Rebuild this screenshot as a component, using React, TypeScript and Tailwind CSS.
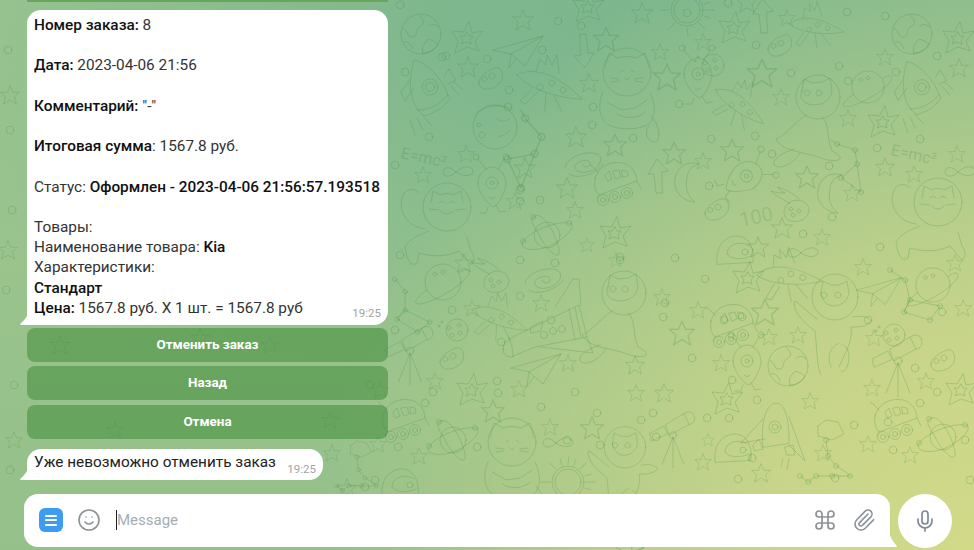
import { Command, Mic, Paperclip, Smile } from 'lucide-react';
import type { ReactNode } from 'react';

type Doodle = [string, number, number, number?, number?];

// wallpaper items: symbol, x, y, scale, rotation
const doodles: Doodle[] = [
  ['star', 523, 20], ['star', 642, 13], ['star', 468, 67], ['star', 589, 83, 0.9], ['star', 606, 39, 1.2], ['star', 660, 52, 0.8],
  ['star', 667, 77, 1.3], ['star', 576, 137], ['star', 615, 145, 1.1], ['star', 674, 153, 1.1], ['star', 525, 168], ['star', 466, 154, 0.8],
  ['star', 423, 175, 0.8], ['star', 567, 188], ['star', 747, 2], ['star', 703, 42, 0.8], ['star', 787, 18, 0.8], ['star', 762, 73, 1.4],
  ['star', 781, 97, 0.8], ['star', 848, 118, 0.8], ['star', 732, 150, 1.1], ['star', 703, 161, 0.8], ['star', 807, 177, 1.1], ['star', 852, 193, 0.8],
  ['star', 885, 167, 0.9], ['star', 914, 174, 0.8], ['star', 885, 57, 0.8], ['star', 959, 68, 0.9], ['star', 957, 154, 0.8], ['star', 782, 228, 1],
  ['star', 822, 237, 0.8], ['star', 758, 247, 1], ['star', 464, 263, 0.9], ['star', 515, 201, 0.8], ['star', 575, 210, 0.8], ['star', 587, 245, 0.7],
  ['star', 616, 260, 0.7], ['star', 472, 308, 0.8], ['star', 541, 303, 0.8], ['star', 662, 297, 0.8], ['star', 682, 333, 1.2], ['star', 568, 363, 0.8],
  ['star', 635, 365, 0.9], ['star', 863, 267, 0.8], ['star', 955, 263, 0.8], ['star', 765, 312, 1.3], ['star', 698, 310, 0.8], ['star', 769, 337, 0.8],
  ['star', 798, 335, 0.8], ['star', 874, 338, 0.8], ['star', 963, 308, 0.8], ['star', 721, 363, 0.8], ['star', 872, 388, 0.8], ['star', 926, 381, 0.8],
  ['star', 810, 401, 0.8], ['star', 868, 444, 0.8], ['star', 823, 453, 0.8], ['star', 910, 455, 0.8], ['star', 708, 440, 0.6], ['star', 703, 462, 0.8],
  ['star', 761, 473, 0.9], ['star', 435, 381, 0.8], ['star', 519, 389, 0.8], ['star', 550, 427, 0.8], ['star', 592, 428, 1.1], ['star', 636, 393, 0.8],
  ['star', 664, 393, 0.9], ['star', 419, 456, 0.8], ['star', 378, 444, 0.8], ['star', 332, 453, 0.8], ['star', 347, 488, 0.9], ['star', 380, 390, 0.8],
  ['star', 493, 411, 1.1], ['star', 60, 345, 0.9], ['star', 200, 338, 0.9], ['star', 270, 345, 0.8], ['star', 115, 430, 0.8], ['star', 330, 420, 0.8],
  ['star', 10, 95, 0.9], ['star', 8, 250, 0.9], ['star', 14, 440, 0.8],
  ['dstar', 733, 28], ['dstar', 957, 38], ['dstar', 882, 122], ['dstar', 466, 38], ['dstar', 587, 7], ['dstar', 614, 233], ['dstar', 747, 278],
  ['dstar', 726, 399], ['dstar', 960, 390], ['dstar', 471, 390],
  ['earth', 421, 34], ['earth', 912, 34], ['earth', 788, 366], ['earth', 630, 530, 1.1],
  ['rocket', 430, 90], ['rocket', 922, 90, 0.95],
  ['catA', 627, 84], ['catB', 814, 109], ['catC', 938, 212], ['catC', 447, 217], ['catB', 620, 305], ['catD', 835, 309], ['catA', 512, 454], ['catD', 625, 458, 0.9],
  ['ufo', 550, 87], ['ufo', 817, 28, 0.8, -12], ['ufo', 740, 107, 0.85, 15], ['ufo', 500, 320, 0.85], ['ufo', 790, 278, 0.95, -15],
  ['ring', 868, 87, 0.9], ['ring', 443, 282], ['ring', 933, 285, 0.95],
  ['tri', 855, 160], ['tri', 535, 148, 1.3, 30], ['box', 910, 300], ['box', 405, 310, 0.9, 15], ['chain', 830, 450], ['chain', 360, 465, 0.8],
  ['rover', 617, 183], ['rover', 733, 325], ['rover', 897, 420], ['rover', 405, 420],
  ['scope', 898, 363], ['scope', 410, 353, 0.95], ['scope', 673, 437, 0.9],
  ['atom', 547, 235], ['atom', 943, 437], ['atom', 453, 440],
  ['sun', 687, 10], ['sun', 568, 482],
  ['meteor', 797, 207], ['meteor', 497, 278],
  ['spiral', 583, 162], ['spiral', 543, 278],
  ['shuttle', 553, 323], ['capeRocket', 775, 425],
  ['alien', 698, 78], ['alien', 492, 187], ['alien', 747, 365], ['alien', 743, 178, 1, 60],
  ['plane', 517, 52], ['plane', 878, 292, 0.9], ['plane', 535, 370],
  ['arrow', 582, 50], ['arrow', 765, 17, 1, 180], ['arrow', 660, 177, 1, 180],
  ['moon', 830, 193], ['moon', 687, 182],
  ['face', 495, 127],
  ['bact', 491, 78], ['bact', 780, 45], ['bact', 717, 209], ['bact', 452, 358], ['bact', 943, 360],
  ['inf', 460, 172], ['inf', 962, 172], ['inf', 805, 253], ['inf', 560, 443],
  ['ball', 713, 65], ['ball', 894, 335], ['ball', 457, 330],
  ['helm', 735, 252], ['helm', 400, 485], ['helm', 733, 450],
];

const dots: [number, number][] = [
  [558, 21], [581, 26], [687, 13], [542, 50], [446, 56], [487, 59], [442, 57], [509, 90], [508, 107], [679, 104], [593, 107], [592, 125], [429, 137], [633, 138],
  [405, 72], [728, 3], [847, 12], [885, 16], [756, 45], [791, 73], [839, 66], [848, 81], [896, 72], [937, 56], [711, 139], [755, 136], [772, 154], [829, 166],
  [877, 148], [920, 139], [709, 186], [832, 217], [803, 234], [540, 200], [520, 201], [520, 190], [620, 257], [620, 260], [555, 263], [520, 260],
  [520, 296], [452, 310], [501, 342], [551, 320], [663, 317], [665, 303], [675, 258], [705, 279], [724, 320], [742, 317], [692, 358], [732, 380], [757, 400], [707, 418],
  [729, 418], [752, 458], [738, 479], [880, 247], [868, 320], [942, 312], [915, 368], [937, 392], [920, 403], [854, 425], [888, 422], [893, 450], [835, 478], [433, 392],
  [425, 403], [497, 381], [498, 393], [575, 392], [541, 407], [597, 413], [567, 440], [653, 413], [641, 420], [656, 437], [600, 445], [398, 447], [477, 447], [365, 487],
  [370, 385], [8, 50], [10, 130], [12, 210], [6, 290], [14, 385], [10, 470], [400, 5], [395, 165], [400, 255], [395, 330], [965, 440], [970, 480], [375, 480],
];

function Bold({ children }: { children: ReactNode }) {
  return <span className="font-medium text-[#111]">{children}</span>;
}

function Wallpaper() {
  return (
    <svg className="absolute inset-0" width={974} height={550} viewBox="0 0 974 550" fill="none" stroke="#3f8a45" strokeOpacity={0.25} strokeWidth={1} strokeLinejoin="round" strokeLinecap="round">
      <defs>
        <path id="star" d="M0-10 3-3 10.500-3 5 2 7 10 0 5.500-7 10-5 2-10.500-3-3-3Z" />
        <g id="dstar">
          <path d="M3-16 6-5 17-7 9 3 13 13 1 9-11 15-8 3-14-7-3-6Z" />
          <path d="M1-6 3-2 7-2 4 2 5 6 0 4-5 6-3 2-6-2-2-2Z" />
        </g>
        <g id="earth">
          <circle r="20" />
          <path d="M-18-6C-12-2-14 4-8 3-3 2-6-6 0-8 5-10 2-15-2-19M2 19C0 12 3 11 5 7 8 3 14 8 17 10 14 16 8 19 2 19ZM8-8C11-10 15-10 18-7M-17 8C-12 6-10 11-8 15" />
        </g>
        <g id="rocket">
          <path d="M-12 20C-22 6-21-12-16-30-4-28 12-12 18 5 10 14 0 20-12 20Z" />
          <circle cx="0" cy="-3" r="8" /><circle cx="0" cy="-3" r="4.500" />
          <path d="M-12 20-6 26C4 24 16 16 20 8L18 5M-16-2-25 11-29 2-21-9M14-13 19-21 26-10 18-6M-13 28-7 40M-20 30-15 45M-8 25 2 36 M21-4 29 5M24-8 33 0" />
        </g>
        <g id="catA">
          <circle cy="-12" r="24" />
          <path d="M-22-16-18-31-9-26C-3-28 3-28 9-26L18-31 22-16M-6-12-3-14M4-14 7-12M-2-6 0-4 2-6M-16-6-8-5M-16-2-8-3M8-5 16-6M8-3 16-2M-24 8C-30 20-28 38-16 42-6 46 12 46 22 40 30 32 28 18 23 8M-20 18-6 26 8 24 20 16M-10 30C0 36 12 34 18 28M24 32C34 42 34 60 27 58 18 56 18 46 22 42" />
        </g>
        <g id="catB">
          <circle cx="4" cy="-12" r="22" />
          <path d="M-12-18-10-30-2-26 8-27 16-31 18-18C16-4 0-2-8-6-14-10-14-14-12-18ZM-4-16A3 3 0 1 0-4-15.900M8-16A3 3 0 1 0 8-15.900M-8 6C-20 14-28 26-38 30-30 44-10 42 10 50 24 54 34 50 18 42 12 28 16 14 8 8M-14 44C-20 54-34 62-40 56-42 48-26 42-20 40" />
        </g>
        <g id="catC">
          <circle cy="-10" r="24" />
          <path d="M-16-14-14-26-6-22C-2-24 2-24 6-22L14-26 16-14M-8-14-5-16-2-14M2-14 5-16 8-14M-6-6C-3-2 3-2 6-6M-18-8-8-7M8-7 18-8M-22 12C-34 10-44 4-46-12-46-26-36-32-28-24M-18 14C-28 18-38 22-42 30-40 44-36 50-30 46L-28 36C-14 40 0 40 12 34L22 46C26 50 30 42 24 34L20 20" />
        </g>
        <g id="catD">
          <circle cy="-12" r="23" />
          <path d="M-14-16-12-28-4-24 4-24 12-28 14-16C12-6 4-3-2-3-10-4-13-10-14-16ZM-8-14A3 3 0 1 0-8-13.900M6-14A3 3 0 1 0 6-13.900M-18 10C-24 6-34-4-40-8-44-2-34 12-20 22-18 40-18 60-14 66M18 8C26 6 34 8 36 12 32 18 22 18 16 18 18 32 10 44 4 58M4 34C-6 38-8 50-4 58M8 36C18 38 14 66 6 62" />
        </g>
        <g id="ufo">
          <path d="M-33-12C-14-22 10-10 32 12 14 12-20 4-33-12ZM-14-16-10-28-4-22-3-32 2-22 7-32 9-14M-18 2-30 14-25 17-13 6M-4 6-5 24M4 8 12 25M-7 0A3 3 0 1 0-7 .100M5-4A3 3 0 1 0 5-3.900M16 3A3 3 0 1 0 16 3.100" />
        </g>
        <g id="ring">
          <circle r="18" />
          <path d="M-16 8C-28 16-30 22-24 22-14 22 18 6 26-8 28-14 22-14 16-9M-6-8A2 2 0 1 0-6-7.900M2-10A2 2 0 1 0 2-9.900" />
        </g>
        <g id="tri">
          <path d="M-18-16 0-10 2 4-14 18 6 32 2 4M-18-16-24-20" />
          <circle cx="-18" cy="-16" r="2.500" /><circle cx="0" cy="-10" r="2.500" /><circle cx="2" cy="4" r="2.500" /><circle cx="-14" cy="18" r="2.500" /><circle cx="6" cy="32" r="2.500" />
        </g>
        <g id="box">
          <path d="M-20-30-5-20 0 0-6 12 20 20 30 6 0 0M-6 12 0 0" />
          <circle cx="-20" cy="-30" r="2.500" /><circle cx="-5" cy="-20" r="2.500" /><circle cx="0" cy="0" r="2.500" /><circle cx="-6" cy="12" r="2.500" /><circle cx="20" cy="20" r="2.500" /><circle cx="30" cy="6" r="2.500" />
        </g>
        <g id="chain">
          <path d="M-30 26-22 32-14 26 20 26M-12-24-4-30 8-28 14-16 2-10-12-14-12-24ZM-4-10-2 6 6 16 16 22 20 26" />
          <circle cx="-30" cy="26" r="2.500" /><circle cx="-22" cy="32" r="2.500" /><circle cx="-14" cy="26" r="2.500" /><circle cx="2" cy="26" r="2.500" /><circle cx="20" cy="26" r="2.500" /><circle cx="-4" cy="-10" r="2.500" /><circle cx="-2" cy="6" r="2.500" /><circle cx="6" cy="16" r="2.500" />
        </g>
        <g id="rover">
          <path d="M-22-4C-18-18-6-22 6-20 14-18 20-10 20-2L-18 12C-22 8-23 2-22-4ZM-12-8-8-12-5-4-9-2ZM-4-12 2-13 4-6-1-4ZM5-13 10-12 11-7 6-6ZM-24-16-18-10M-26-18-25-16M-18 12-20 16M20-2 24 6" />
          <circle cx="-14" cy="17" r="5.500" /><circle cx="-2" cy="14" r="5.500" /><circle cx="10" cy="10" r="5.500" /><circle cx="-14" cy="17" r="2.500" /><circle cx="-2" cy="14" r="2.500" /><circle cx="10" cy="10" r="2.500" />
        </g>
        <g id="scope">
          <path d="M-24 4-26-4-10-12-6-4ZM-8-14 12-26 18-14-4-2ZM12-26C18-30 24-28 24-20 24-16 20-14 18-14M0 0-12 30M0 0 0 34M0 0 12 30" />
          <circle cx="0" cy="-2" r="4" />
        </g>
        <g id="atom">
          <circle r="13" />
          <path d="M-24 6C-16-4 8-14 22-12 34-10 10 12-8 14-20 16-28 12-24 6ZM-14-18C-6-26 8-4 12 14 14 28 0 16-8 0-12-8-18-14-14-18Z" />
          <circle cx="-14" cy="-18" r="2.500" /><circle cx="22" cy="-12" r="2.500" /><circle cx="-24" cy="6" r="2.500" />
        </g>
        <g id="sun">
          <circle r="13" /><circle r="16" />
          <path d="M0-18 1-26M12-13 18-19M18 0 27 0M12 13 18 19M0 18 1 26M-12 13-18 19M-18 0-27 0M-12-13-18-19M6-17 8-23M-6-17-8-23M17 6 23 8M17-6 23-8" />
        </g>
        <g id="meteor">
          <path d="M-8-4C0-10 10-6 12 2 12 12 2 16-6 14-14 12-16 2-8-4ZM-8-4C-14-8-20-10-26-16-20-14-16-14-12-14-16-16-18-18-20-20-12-18-4-14 2-8M-4 2A2 2 0 1 0-4 2.100M4 4A2 2 0 1 0 4 4.100M-2 8A2 2 0 1 0-2 8.100" />
        </g>
        <g id="spiral">
          <path d="M-18 6C-18-4 2-12 14-8 22-4 16 8 4 10-8 12-12 4-4 0 4-4 10 0 6 4 2 6-2 4 0 2M-14 12C-6 18 14 12 20 2" />
        </g>
        <g id="shuttle">
          <path d="M-50 26C-50 20-44 16-36 12L26-18 34 14-18 24-42 34C-46 34-50 32-50 26ZM-44 14C-42 20-40 26-40 34M22-16 28 14M16-14 22 16M-12 24 40 30 34 14M2-16 20-44 26-44 28-18" />
          <circle cx="-9" cy="12" r="3.500" /><circle cx="0" cy="8" r="3.500" /><circle cx="9" cy="6" r="3.500" />
          <path d="M-22 4-10-2-12 8-22 10Z" />
        </g>
        <g id="capeRocket">
          <path d="M-12 22C-14 4-12-18 0-22 12-22 14-2 14 18ZM-34 18-12-6M-34 18-10 14M14-8 30 36 14 20" />
          <circle cx="0" cy="2" r="6" /><circle cx="0" cy="2" r="3" />
          <path d="M-22 20-16 14-12 24-20 26ZM10 22 18 20 20 30 12 30ZM-24 28-26 36M8 34 6 42M14 34 12 44" />
        </g>
        <g id="alien">
          <path d="M-14-4C-14-16-4-20 0-20 8-20 14-12 14-2 12 8 6 18 2 20-4 18-14 6-14-4ZM-6-18-14-28M6-18 12-28M-4 20-6 26-12 26M4 18 8 25 14 24M-3 10C-1 12 1 12 3 10" />
          <circle cx="-16" cy="-30" r="3" /><circle cx="14" cy="-30" r="3" /><circle cy="-4" r="6" /><circle cy="-4" r="2" />
        </g>
        <g id="plane">
          <path d="M-24-2 26-16 8 14-6 2ZM-6 2-8 16-1 7M-6 2 26-16" />
        </g>
        <g id="arrow">
          <path d="M-2-16 4-16 6 3 12 3 3 18-8 6-2 5Z" />
        </g>
        <g id="moon">
          <path d="M6-19C-6-20-14-8-12 4-10 14 0 20 8 20 0 14-2 6 0-4 0-10 4-16 12-18Z" />
        </g>
        <g id="face">
          <circle r="22" />
          <path d="M-20-12C-16-18-10-18-8-20M-6-20C2-22 8-22 16-18M2-8C6-5 10-5 14-8M3 10C8 8 12 8 14 4M-14-2A2 2 0 1 0-14-1.900M-10 8A3 3 0 1 0-10 8.100" />
        </g>
        <g id="bact">
          <path d="M-12 4C-12-2-2-8 4-10 10-12 13-4 11 2 8 8 0 12-6 11-10 10-12 8-12 4ZM-4 1A2.500 2.500 0 1 0-4 1.100M4-2A3 3 0 1 0 4-1.900" />
        </g>
        <g id="inf">
          <path d="M-4 0C-10-6-16-6-17 0-16 6-9 5-4 0 2-6 10-7 13-2 14 4 4 6-4 0Z" />
        </g>
        <g id="ball">
          <circle r="11" />
          <path d="M-6-2A2 2 0 1 0-6-1.900M4-5A2 2 0 1 0 4-4.900M-3 5A2 2 0 1 0-3 5.100M5 3A2 2 0 1 0 5 3.100M-14-8A1 1 0 1 0-14-7.900M-17-4A1 1 0 1 0-17-3.900" />
        </g>
        <g id="helm">
          <path d="M-18 12C-20-6-10-16 2-16 12-16 20-6 18 10ZM-8 2C-8-8 6-12 14-6M-8 2C-4 8 8 8 16 4" />
          <circle cx="10" cy="0" r="3" />
        </g>
      </defs>
      {doodles.map(([id, x, y, s = 1, r = 0], i) => (
        <use key={i} href={`#${id}`} transform={`translate(${x} ${y}) rotate(${r}) scale(${s})`} />
      ))}
      {dots.map(([x, y], i) => (
        <circle key={i} cx={x} cy={y} r={3.800} />
      ))}
      <text x={890} y={155} fontSize={16} fontFamily="Roboto, sans-serif" fill="#3f8a45" fillOpacity={0.25} stroke="none" transform="rotate(12 890 155)">E=mc²</text>
      <text x={400} y={158} fontSize={16} fontFamily="Roboto, sans-serif" fill="#3f8a45" fillOpacity={0.25} stroke="none" transform="rotate(12 400 158)">E=mc²</text>
      <text x={741} y={227} fontSize={20} fontFamily="Roboto, sans-serif" fill="#3f8a45" fillOpacity={0.2} stroke="none" transform="rotate(-12 741 227)">100</text>
    </svg>
  );
}

function KeyboardButton({ label }: { label: string }) {
  return (
    <button className="h-[34px] w-full rounded-[8px] bg-[#3f8c3a]/55 text-center text-[13.400px] font-bold text-white">
      {label}
    </button>
  );
}

export default function App() {
  return (
    <div className="relative h-[550px] w-[974px] overflow-hidden bg-[radial-gradient(circle_at_100%_100%,#d2da88_0%,#c6d48a_20%,rgba(198,212,138,0)_58%),radial-gradient(ellipse_90%_75%_at_72%_0%,#7cb68e_0%,#7fb78d_30%,rgba(127,183,141,0)_100%),linear-gradient(180deg,#9fc790_0%,#95c089_100%)] font-['Roboto',sans-serif]">
      <Wallpaper />
      <div className="relative flex h-full flex-col">
        <div className="ml-[27px] h-[2px] w-[361px] bg-[#6aa55f]" />
        <div className="relative ml-[27px] mt-[8px] w-[361px] rounded-[14px] rounded-bl-none bg-white px-[7px] pb-[7px] pt-[5px] text-[15.350px] leading-[20.2px] text-[#333]">
          <div><Bold>Номер заказа:</Bold> 8</div>
          <div className="mt-[20.2px]"><Bold>Дата:</Bold> 2023-04-06 21:56</div>
          <div className="mt-[20.2px]"><Bold>Комментарий:</Bold> "-"</div>
          <div className="mt-[20.2px]"><Bold>Итоговая сумма</Bold>: 1567.8 руб.</div>
          <div className="mt-[20.2px]">Статус: <Bold>Оформлен - 2023-04-06 21:56:57.193518</Bold></div>
          <div className="mt-[20.2px]">Товары:</div>
          <div>Наименование товара: <Bold>Kia</Bold></div>
          <div>Характеристики:</div>
          <div><Bold>Стандарт</Bold></div>
          <div><Bold>Цена:</Bold> 1567.8 руб. X 1 шт. = 1567.8 руб</div>
          <span className="absolute bottom-[5px] right-[7px] text-[11.500px] leading-[14px] text-[#a3a3a3]">19:25</span>
          <svg className="absolute bottom-0 left-[-7px]" width="8" height="12" viewBox="0 0 8 12"><path d="M8 0V12H1C0 12 0 11 .6 10.500 4 8 7 4 8 0Z" fill="#fff" /></svg>
        </div>
        <div className="ml-[27px] mt-[3px] flex w-[361px] flex-col gap-[4.500px]">
          <KeyboardButton label="Отменить заказ" />
          <KeyboardButton label="Назад" />
          <KeyboardButton label="Отмена" />
        </div>
        <div className="relative ml-[27px] mt-[10px] flex h-[31px] w-[296px] items-start rounded-[14px] rounded-bl-none bg-white px-[7px] pt-[3px] text-[15.350px] leading-[20px] text-[#222]">
          Уже невозможно отменить заказ
          <span className="absolute bottom-[4px] right-[7px] text-[11.500px] leading-[14px] text-[#a3a3a3]">19:25</span>
          <svg className="absolute bottom-0 left-[-7px]" width="8" height="12" viewBox="0 0 8 12"><path d="M8 0V12H1C0 12 0 11 .6 10.500 4 8 7 4 8 0Z" fill="#fff" /></svg>
        </div>
        <div className="mt-[14px] flex items-start pl-[24px]">
          <div className="relative flex h-[53px] w-[866px] items-center rounded-[14px] rounded-br-none bg-white pl-[15px] pr-[14px]">
            <div className="flex h-[24px] w-[24px] flex-col items-center justify-center gap-[2.500px] rounded-[6px] bg-[#3d9bf0]">
              <span className="h-[2px] w-[12px] rounded-full bg-white" />
              <span className="h-[2px] w-[12px] rounded-full bg-white" />
              <span className="h-[2px] w-[12px] rounded-full bg-white" />
            </div>
            <Smile className="ml-[14px] h-[24px] w-[24px] text-[#8d9297]" strokeWidth={1.600} />
            <span className="ml-[15px] h-[20px] w-px bg-[#222]" />
            <span className="text-[15px] text-[#a4adb5]">Message</span>
            <Command className="ml-auto h-[24px] w-[24px] text-[#8d9297]" strokeWidth={1.700} />
            <Paperclip className="ml-[15px] h-[24px] w-[24px] text-[#8d9297]" strokeWidth={1.600} />
            <svg className="absolute bottom-0 right-[-7px]" width="8" height="14" viewBox="0 0 8 14"><path d="M0 0V14H7C8 14 8 13 7.500 12.500 4 9 2 5 0 0Z" fill="#fff" /></svg>
          </div>
          <div className="ml-[8px] flex h-[54px] w-[54px] items-center justify-center rounded-full bg-white">
            <Mic className="h-[24px] w-[24px] text-[#7e8a96]" strokeWidth={1.700} />
          </div>
        </div>
      </div>
    </div>
  );
}
